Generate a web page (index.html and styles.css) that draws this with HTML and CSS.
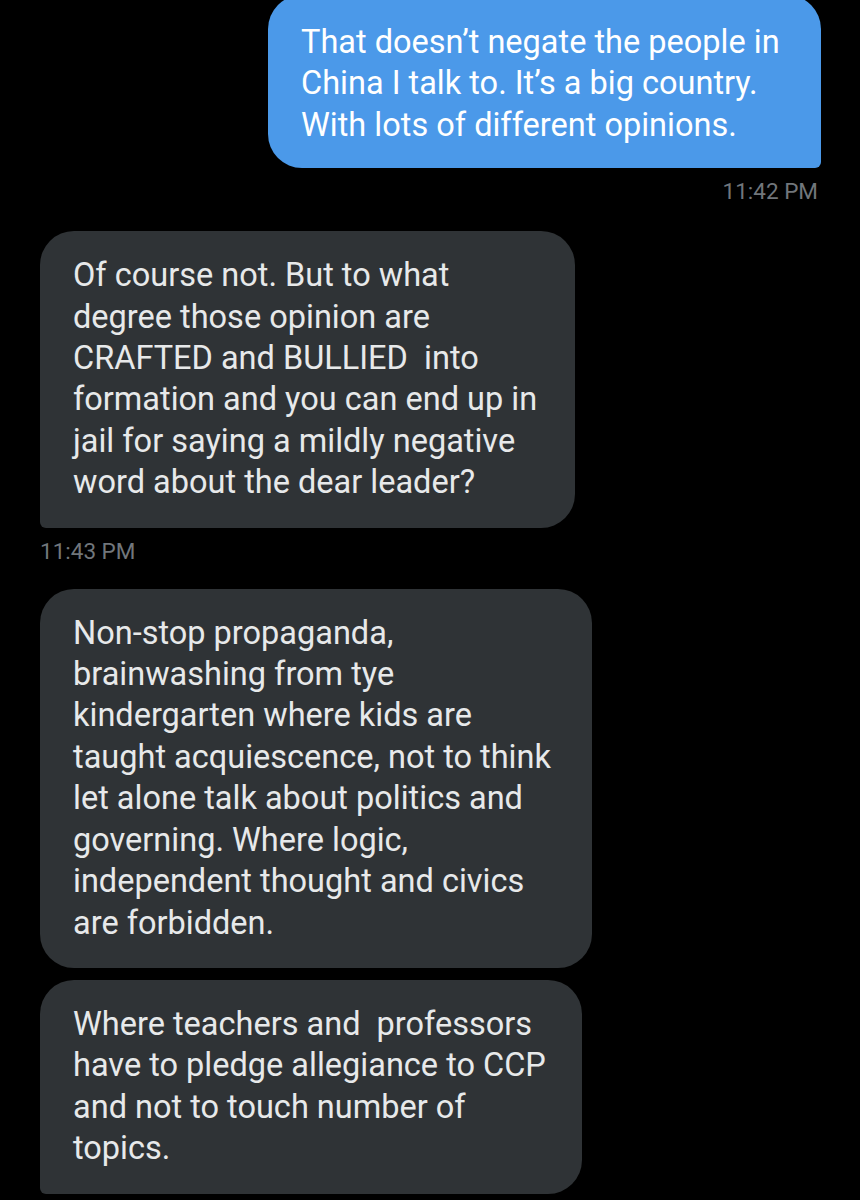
FILE: index.html
```html
<!DOCTYPE html>
<html lang="en">
<head>
<meta charset="utf-8">
<title>Messages</title>
<link rel="stylesheet" href="styles.css">
</head>
<body>
<main class="thread">
  <div class="msg msg-out">
    <div class="bubble bubble-blue tail-right w-blue">That doesn’t negate the people in<br>China I talk to. It’s a big country.<br>With lots of different opinions.</div>
    <div class="time time-right">11:42 PM</div>
  </div>

  <div class="msg msg-in first-in">
    <div class="bubble bubble-gray tail-left w-g1">Of course not. But to what<br>degree those opinion are<br>CRAFTED and BULLIED&nbsp; into<br>formation and you can end up in<br>jail for saying a mildly negative<br>word about the dear leader?</div>
    <div class="time time-left">11:43 PM</div>
  </div>

  <div class="msg msg-in group">
    <div class="bubble bubble-gray w-g2">Non-stop propaganda,<br>brainwashing from tye<br>kindergarten where kids are<br>taught acquiescence, not to think<br>let alone talk about politics and<br>governing. Where logic,<br>independent thought and civics<br>are forbidden.</div>
    <div class="bubble bubble-gray tail-left w-g3">Where teachers and&nbsp; professors<br>have to pledge allegiance to CCP<br>and not to touch number of<br>topics.</div>
  </div>
</main>
</body>
</html>
```

FILE: styles.css
```css
html, body {
  margin: 0;
  padding: 0;
  background: #000;
}

body {
  font-family: Roboto, "Noto Sans", sans-serif;
  color: #e7e9ea;
  width: 860px;
  height: 1200px;
  overflow: hidden;
}

.thread {
  display: flex;
  flex-direction: column;
  padding: 0 40px;
}

.msg {
  display: flex;
  flex-direction: column;
}

.msg-out {
  align-items: flex-end;
  margin-top: -5px;
}

.msg-in {
  align-items: flex-start;
}

.first-in {
  margin-top: 28px;
}

.group {
  gap: 12px;
  margin-top: 26px;
}

.bubble {
  box-sizing: border-box;
  border-radius: 34px;
  padding: 24px 14px 24px 33px;
  font-size: 32.5px;
  line-height: 41.4px;
  white-space: nowrap;
}

.bubble-blue {
  background: #4b99e9;
  color: #fff;
  padding-top: 27px;
  padding-bottom: 22px;
}

.bubble-gray {
  background: #2f3336;
  color: #e7e9ea;
}

.tail-right {
  border-bottom-right-radius: 6px;
}

.tail-left {
  border-bottom-left-radius: 6px;
}

.w-blue { width: 553px; margin-right: -1px; }
.w-g1 { width: 535px; }
.w-g2 { width: 552px; }
.w-g3 { width: 542px; }

.time {
  font-size: 22.5px;
  color: #71767b;
  line-height: 24px;
}

.time-right {
  margin-top: 11px;
  margin-right: 2px;
}

.time-left {
  margin-top: 11px;
}
```
